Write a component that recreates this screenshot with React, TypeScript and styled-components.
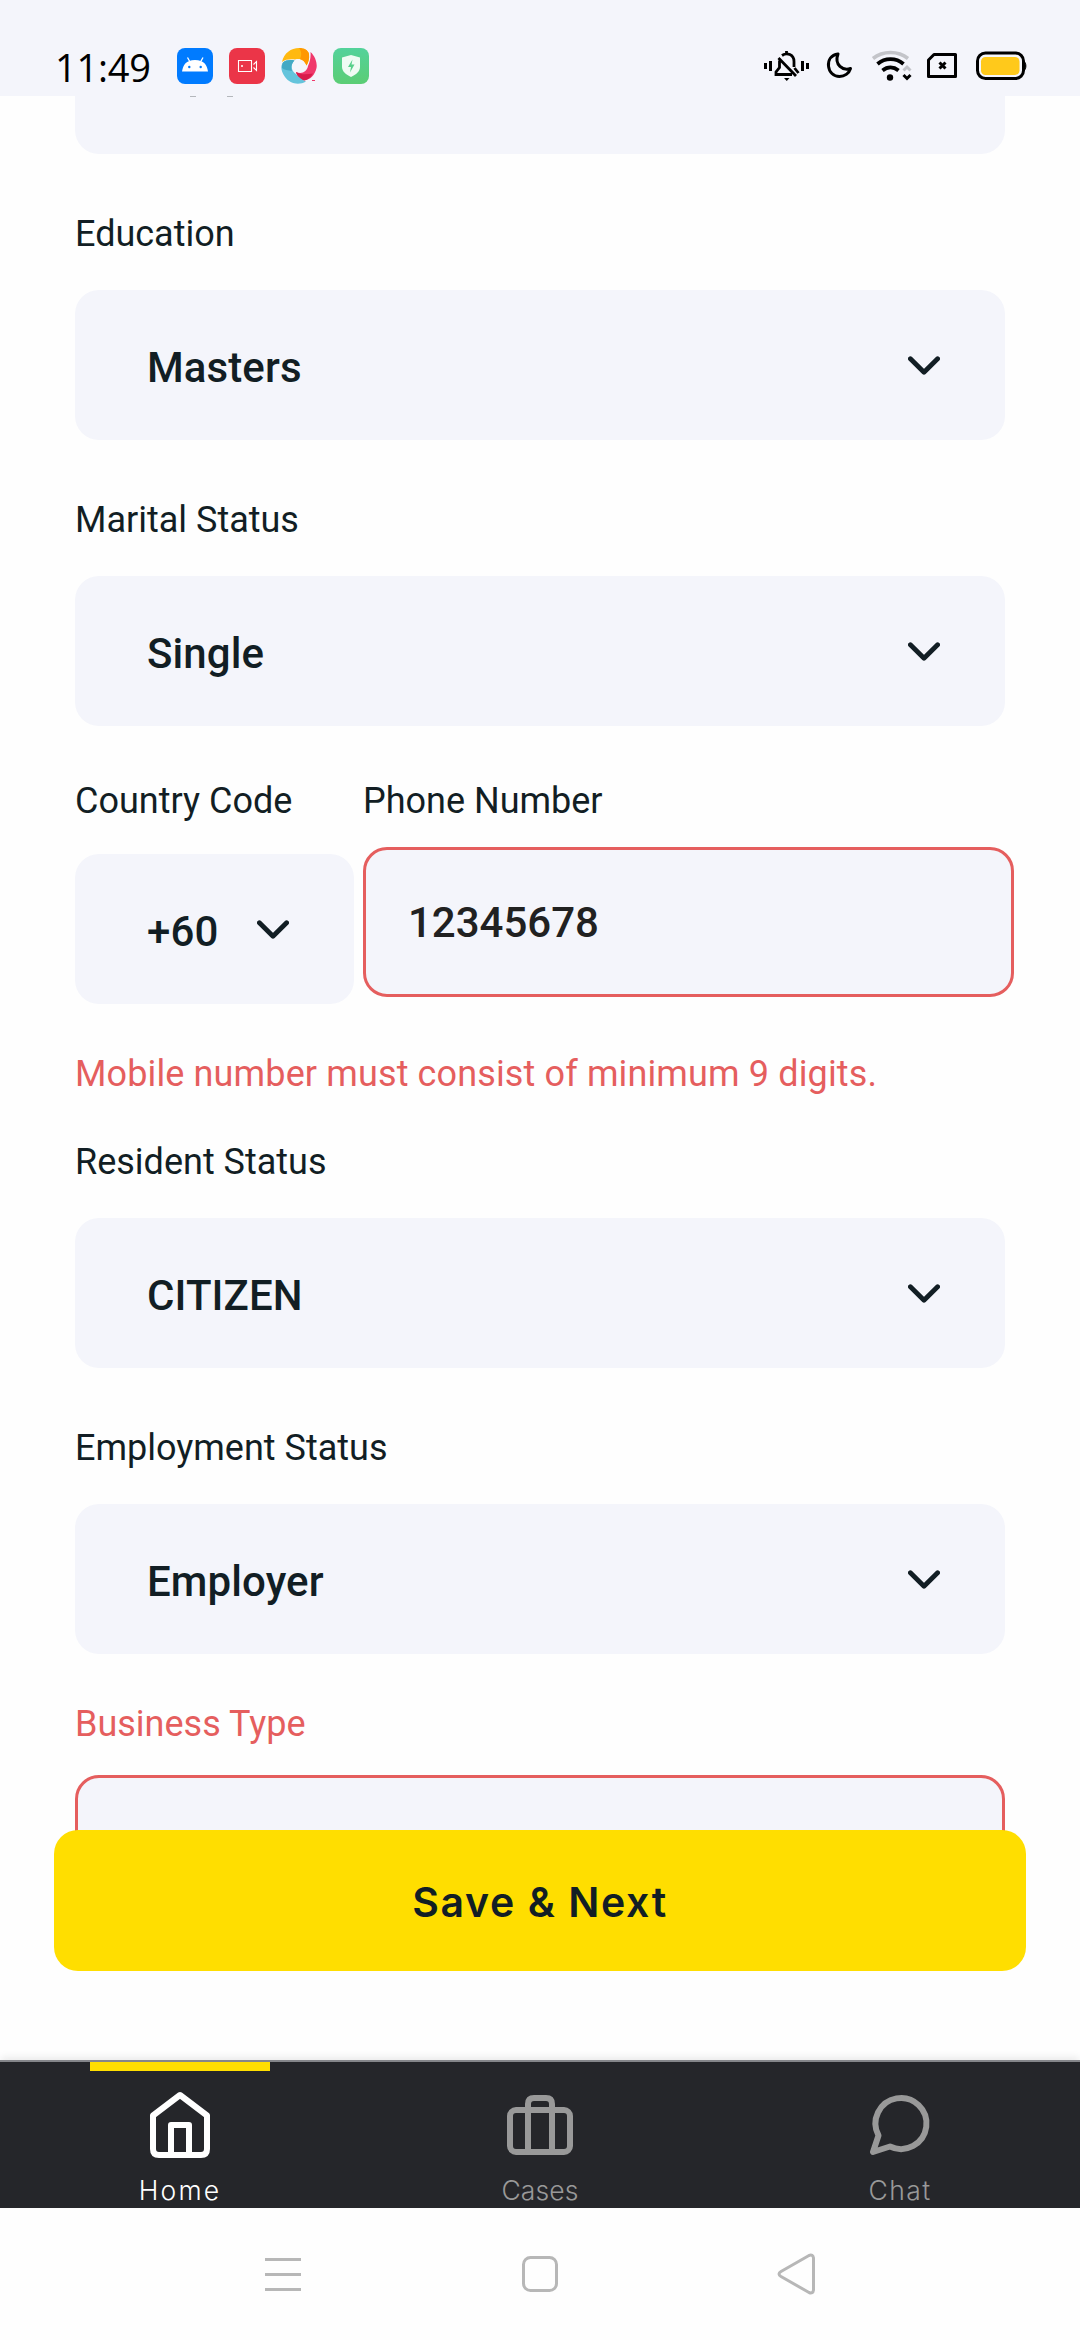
import React from "react";
import styled, { createGlobalStyle } from "styled-components";

const INK = "#121e24";
const RED = "#e55e5e";
const FIELD = "#f4f5fb";
const YELLOW = "#ffde00";

const GlobalStyle = createGlobalStyle`
  * { box-sizing: border-box; }
  body { margin: 0; background: #fefefe; font-family: Roboto, sans-serif; }
`;

const Screen = styled.div`
  width: 1080px;
  height: 2340px;
  display: flex;
  flex-direction: column;
  overflow: hidden;
  background: #fefefe;
  color: ${INK};
`;

const StatusBar = styled.header`
  height: 96px;
  flex: none;
  display: flex;
  align-items: center;
  padding: 36px 52px 0 55px;
  background: ${FIELD};
`;

const Clock = styled.time`
  width: 122px;
  padding-top: 2px;
  color: #000;
  font-family: "Open Sans", sans-serif;
  font-size: 38px;
  line-height: 60px;
  letter-spacing: -0.2px;
  white-space: nowrap;
`;

const AppIcons = styled.div`
  display: flex;
  gap: 16px;
`;

const StatusIcons = styled.div`
  display: flex;
  align-items: center;
  margin-left: auto;
`;

const Form = styled.main`
  height: 1964px;
  flex: none;
  position: relative;
  display: flex;
  flex-direction: column;
  align-items: flex-start;
  padding: 0 75px;
`;

const ClippedField = styled.div`
  width: 930px;
  height: 58px;
  flex: none;
  display: flex;
  gap: 31px;
  padding-left: 115px;
  border-radius: 0 0 24px 24px;
  background: ${FIELD};
`;

const Descender = styled.i`
  width: 6px;
  height: 1px;
  background: #b4b7bc;
`;

const Field = styled.div<{ $top: number }>`
  display: flex;
  flex-direction: column;
  flex: none;
  padding-top: ${(p) => p.$top}px;
`;

const Label = styled.label<{ $error?: boolean; $gap: number }>`
  height: 42px;
  margin-bottom: ${(p) => p.$gap}px;
  font-size: 36px;
  line-height: 42px;
  white-space: nowrap;
  color: ${(p) => (p.$error ? RED : INK)};
`;

const Select = styled.button<{ $width?: number }>`
  width: ${(p) => p.$width ?? 930}px;
  height: 150px;
  display: flex;
  align-items: center;
  justify-content: space-between;
  border: 0;
  border-radius: 24px;
  padding: 5px 65px 0 72px;
  background: ${FIELD};
  color: ${INK};
  font: 500 42px/50px Roboto, sans-serif;
  letter-spacing: 0.1px;
  text-align: left;
`;

const Input = styled.input<{ $width: number }>`
  width: ${(p) => p.$width}px;
  height: 150px;
  border: 3px solid ${RED};
  border-radius: 24px;
  padding: 0 42px;
  background: ${FIELD};
  color: #212121;
  font: 500 42px/50px Roboto, sans-serif;
  outline: none;
`;

const PhoneRow = styled.div`
  display: flex;
  align-items: flex-start;
  gap: 9px;
  padding-top: 54px;
`;

const ErrorText = styled.p`
  margin: 49px 0 0;
  height: 42px;
  font-size: 36px;
  line-height: 42px;
  letter-spacing: 0.13px;
  white-space: nowrap;
  color: ${RED};
`;

const SaveButton = styled.button`
  position: absolute;
  left: 54px;
  right: 54px;
  top: 1734px;
  height: 141px;
  border: 0;
  border-radius: 24px;
  background: ${YELLOW};
  color: ${INK};
  font: 600 41px/50px Inter, sans-serif;
  letter-spacing: 1.6px;
  padding: 3px 0 0;
`;

const TabBar = styled.nav`
  height: 148px;
  flex: none;
  display: grid;
  grid-template-columns: repeat(3, 1fr);
  border-top: 2px solid #85868a;
  background: #25262a;
  box-shadow: 0 -4px 7px -1px rgba(0, 0, 0, 0.08);
  z-index: 1;
`;

const Tab = styled.a<{ $active?: boolean }>`
  display: flex;
  flex-direction: column;
  align-items: center;
  color: ${(p) => (p.$active ? "#ffffff" : "#999999")};
`;

const Marker = styled.span<{ $active?: boolean }>`
  width: 180px;
  height: 9px;
  background: ${(p) => (p.$active ? YELLOW : "transparent")};
`;

const TabLabel = styled.span<{ $spacing: number }>`
  font: 300 26.5px/32px Inter, sans-serif;
  letter-spacing: ${(p) => p.$spacing}px;
  margin-top: 13px;
`;

const TabIcon = styled.svg`
  width: 72px;
  height: 72px;
  margin-top: 18px;
  fill: none;
  stroke: currentColor;
  stroke-width: 6;
  stroke-linejoin: round;
  stroke-linecap: round;
`;

const SystemBar = styled.footer`
  flex: 1;
  display: flex;
  justify-content: center;
  padding-top: 44px;
  gap: 213px;
  background: #fefefe;
`;

const SystemIcon = styled.svg`
  width: 44px;
  height: 44px;
  fill: none;
  stroke: #b7b7b7;
  stroke-width: 3;
  stroke-linejoin: round;
`;

const ChevronSvg = styled.svg`
  width: 32px;
  height: 20px;
  margin-bottom: 4px;
  fill: none;
  stroke: ${INK};
  stroke-width: 4.8;
  stroke-linecap: round;
  stroke-linejoin: round;
`;

const Chevron = () => (
  <ChevronSvg viewBox="0 0 32 20">
    <path d="M2.400 2.800 16 16.200 29.600 2.800" />
  </ChevronSvg>
);

const AndroidIcon = () => (
  <svg width="36" height="36" viewBox="0 0 36 36">
    <rect width="36" height="36" rx="8" fill="#007bff" />
    <path d="M5 23.5C6 17 9 12 18 12s12 5 13 11.500z" fill="#fff" />
    <path d="M10.500 9.500 13 14M26 9.500 23.500 14" stroke="#fff" strokeWidth="1.300" />
    <circle cx="12.300" cy="19" r="1.200" fill="#007bff" />
    <circle cx="23.700" cy="19" r="1.200" fill="#007bff" />
  </svg>
);

const RecorderIcon = () => (
  <svg width="36" height="36" viewBox="0 0 36 36" fill="none" stroke="#fff" strokeWidth="1.100">
    <rect width="36" height="36" rx="8" fill="#eb3548" stroke="none" />
    <path d="M9.500 12.500H22.500V23.500H9.500z" />
    <path d="M24.500 16.500 27.500 13.500V22.500L24.500 19.500" />
    <circle cx="13" cy="18" r="1" fill="#fff" stroke="none" />
  </svg>
);

const SwirlIcon = () => (
  <svg width="36" height="36" viewBox="0 0 36 36">
    <path d="M1 14C3 5 10 0 18 0c5 0 9 2 10 6 .5 5-.5 8-2.500 11.500C24 12 19 10 14 11.500 9 11 4 11.500 1 14z" fill="#ffb90f" />
    <path d="M18 0c5 0 9 2 10 6 .5 5-.5 8-2.500 11.500C24 14 22 12 19 11c2-4 1.500-8-1-11z" fill="#ff9800" />
    <path d="M29.500 4C34 8 36.500 15 35.500 20 34 27 29 32 23 32.500c-4-1-7-4-8-8.500 6 2.500 11-.5 12-6 2-4.500 3-9 2.500-14z" fill="#f0386b" />
    <path d="M15 24c6 3.500 12 2 17 1.500-2.500 4-5 6.500-9 7-4-1-7-4-8-8.500z" fill="#d81b4a" />
    <path d="M13.500 12.500C9 17 10 23 15 26c3 3.500 6 6 10 7.500C18 37.500 9 36 4 29-1 22 0 17 2 14.500c3-2.500 7-3 11.500-2z" fill="#64c4dc" />
    <path d="M13.500 12.500C10 16 10 20 11 23c-4-1-8-1-10-3 0-2 0-4 1-5.500 3-2.500 7-3 11.500-2z" fill="#43a9c4" />
    <path d="M31 32.500h3" stroke="#f0386b" strokeWidth="1" />
  </svg>
);

const ShieldIcon = () => (
  <svg width="36" height="36" viewBox="0 0 36 36">
    <defs>
      <linearGradient id="shieldBg" x1="0" y1="0" x2="0" y2="1">
        <stop offset="0" stopColor="#53d29b" />
        <stop offset="1" stopColor="#5bcd74" />
      </linearGradient>
    </defs>
    <rect width="36" height="36" rx="8" fill="url(#shieldBg)" />
    <path d="M18 7 27 9.500V19c0 4.500-4 7.500-9 10-5-2.500-9-5.500-9-10V9.500z" fill="#effbf3" />
    <path d="M19.500 11.500 15 19h3l-1 5.500 4.500-8H18.500z" fill="#57d08a" />
  </svg>
);

/* Right-hand system indicators share one 264x32 strip so their optical spacing stays fixed. */
const Indicators = () => (
  <svg width="264" height="32" viewBox="0 0 264 32" fill="none" stroke="#000">
    <path d="M1.500 13v6M6.500 11v10M38.500 11v10M43.500 13v6" strokeWidth="3" />
    <path d="M22.500 1v3M18 5.500C23 2 30 4.500 30 11.500V17M30.500 18l4 5M14.500 8 32 26M15.500 10.500v7L12 22v2.500H28" strokeWidth="2.800" />
    <path d="M20 28h5.500l-2.750 3z" fill="#000" stroke="none" />
    <path d="M74 4C67 5 64 10 64.500 16c.5 6 5 10.500 11 10.500 5 0 9.500-3 11-8C79 21 70 15 74 4z" strokeWidth="3" strokeLinejoin="round" />
    <path d="M109 8.500C119 .5 134 .5 144 8.500" stroke="#c3c4c9" strokeWidth="3.600" />
    <path d="M113.500 14C121 7.500 132 7.500 139.500 14M118.500 20.500c5-4 11-4 16 0" strokeWidth="3.800" />
    <circle cx="126" cy="27.500" r="3.200" fill="#000" stroke="none" />
    <path d="m139.500 20.500 3.500-3.500 3.500 3.500" stroke="#c3c4c9" strokeWidth="3" />
    <path d="m139.500 25 3.500 3.500 3.500-3.500" strokeWidth="3" />
    <path d="M170 4.500h21.500v22H164.500V10z" strokeWidth="3" strokeLinejoin="round" />
    <path d="m175.500 12.500 6 6m0-6-6 6" strokeWidth="3" />
    <rect x="213.500" y="3" width="46" height="25.500" rx="8" strokeWidth="3" />
    <rect x="217" y="7" width="38.500" height="18" rx="4.500" fill="#ffc91b" stroke="none" />
    <path d="M260 11.500c2.500 1 2.500 8 0 9z" fill="#000" strokeWidth="1" />
  </svg>
);

type SelectFieldProps = { label: string; value: string; top: number };

const SelectField = ({ label, value, top }: SelectFieldProps) => (
  <Field $top={top}>
    <Label $gap={35}>{label}</Label>
    <Select>
      {value}
      <Chevron />
    </Select>
  </Field>
);

export default function App() {
  return (
    <Screen>
      <GlobalStyle />
      <StatusBar>
        <Clock>11:49</Clock>
        <AppIcons>
          <AndroidIcon />
          <RecorderIcon />
          <SwirlIcon />
          <ShieldIcon />
        </AppIcons>
        <StatusIcons>
          <Indicators />
        </StatusIcons>
      </StatusBar>

      <Form>
        <ClippedField>
          <Descender />
          <Descender />
        </ClippedField>
        <SelectField label="Education" value="Masters" top={59} />
        <SelectField label="Marital Status" value="Single" top={59} />
        <PhoneRow>
          <Field $top={0}>
            <Label $gap={32}>Country Code</Label>
            <Select $width={279}>
              +60
              <Chevron />
            </Select>
          </Field>
          <Field $top={0}>
            <Label $gap={25}>Phone Number</Label>
            <Input $width={651} defaultValue="12345678" />
          </Field>
        </PhoneRow>
        <ErrorText>Mobile number must consist of minimum 9 digits.</ErrorText>
        <SelectField label="Resident Status" value="CITIZEN" top={46} />
        <SelectField label="Employment Status" value="Employer" top={59} />
        <Field $top={49}>
          <Label $error $gap={30}>Business Type</Label>
          <Input $width={930} aria-label="Business Type" />
        </Field>
        <SaveButton>Save &amp; Next</SaveButton>
      </Form>

      <TabBar>
        <Tab $active>
          <Marker $active />
          <TabIcon viewBox="0 0 72 72">
            <path d="M9 26.500 36 6l27 20.500V60q0 6-6 6H15q-6 0-6-6z" />
            <path d="M27 66V36h18v30" />
          </TabIcon>
          <TabLabel $spacing={2.2}>Home</TabLabel>
        </Tab>
        <Tab>
          <Marker />
          <TabIcon viewBox="0 0 72 72">
            <rect x="6" y="21" width="60" height="42" rx="6" />
            <path d="M24 63V15q0-6 6-6h12q6 0 6 6v48" />
          </TabIcon>
          <TabLabel $spacing={0.1}>Cases</TabLabel>
        </Tab>
        <Tab>
          <Marker />
          <TabIcon viewBox="0 0 72 72">
            <path d="M14.500 46.500A25.500 25.500 0 1 1 26 57.500L9 63z" />
          </TabIcon>
          <TabLabel $spacing={1.4}>Chat</TabLabel>
        </Tab>
      </TabBar>

      <SystemBar>
        <SystemIcon viewBox="0 0 44 44">
          <path d="M4 7.500h36M4 22.500h36M4 37.500h36" />
        </SystemIcon>
        <SystemIcon viewBox="0 0 44 44">
          <rect x="5.500" y="5.500" width="33" height="33" rx="7" />
        </SystemIcon>
        <SystemIcon viewBox="0 0 44 44">
          <path d="M34 3.500 6 19.500Q2 22 6 24.500L34 40.500Q38 42 38.500 38V6Q38 2 34 3.500z" />
        </SystemIcon>
      </SystemBar>
    </Screen>
  );
}
